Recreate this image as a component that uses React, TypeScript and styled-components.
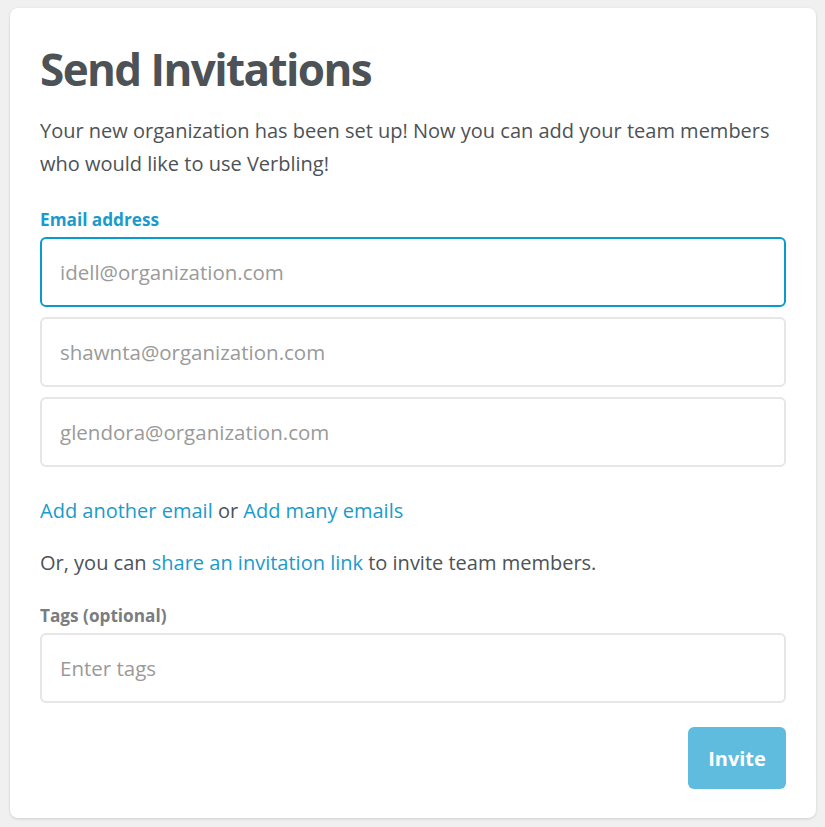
import React from "react";
import styled, { createGlobalStyle } from "styled-components";

const Global = createGlobalStyle`
  html, body { margin: 0; padding: 0; background: #f0f0f0; }
  body { font-family: "Open Sans", "Noto Sans", sans-serif; }
  * { box-sizing: border-box; }
`;

const Page = styled.div`
  padding: 8px 9px 9px 10px;
`;

const Card = styled.div`
  background: #fff;
  border-radius: 8px;
  box-shadow: 0 1px 3px rgba(0, 0, 0, 0.14);
  padding: 36px 30px 29px 30px;
  display: flex;
  flex-direction: column;
`;

const Title = styled.h1`
  margin: 0;
  font-size: 44px;
  font-weight: 700;
  letter-spacing: -1.6px;
  line-height: 50px;
  color: #4d5256;
`;

const Intro = styled.p`
  margin: 20px 0 0;
  font-size: 20px;
  line-height: 33px;
  color: #4d5256;
`;

const Label = styled.label<{ $accent?: boolean }>`
  display: block;
  margin-top: 28px;
  font-size: 17.2px;
  font-weight: 700;
  line-height: 24px;
  color: ${(p) => (p.$accent ? "#1a9bcb" : "#7a7d80")};
`;

const Fields = styled.div`
  display: flex;
  flex-direction: column;
  gap: 10px;
  margin-top: 5px;
`;

const Input = styled.input<{ $focus?: boolean }>`
  width: 100%;
  height: 70px;
  border: 2px solid ${(p) => (p.$focus ? "#0a9bcd" : "#e6e6e6")};
  border-radius: 6px;
  padding: 0 18px;
  font-family: "Open Sans", "Noto Sans", sans-serif;
  font-size: 20.5px;
  color: #4d5256;
  caret-color: #333;
  outline: none;
  background: #fff;
  &::placeholder { color: #9a9a9a; }
`;

const Line = styled.p<{ $top: number }>`
  margin: ${(p) => p.$top}px 0 0;
  font-size: 20px;
  line-height: 26px;
  color: #4d5256;
`;

const Link = styled.a`
  color: #1a9bcb;
  text-decoration: none;
  cursor: pointer;
`;

const Footer = styled.div`
  display: flex;
  justify-content: flex-end;
  margin-top: 24px;
`;

const Button = styled.button`
  width: 98px;
  height: 62px;
  border: none;
  border-radius: 6px;
  background: #5fbcdf;
  color: #fff;
  font-family: "Open Sans", "Noto Sans", sans-serif;
  font-size: 20px;
  font-weight: 700;
  cursor: pointer;
`;

export default function App() {
  return (
    <Page>
      <Global />
      <Card>
        <Title>Send Invitations</Title>
        <Intro>
          Your new organization has been set up! Now you can add your team members who would
          like to use Verbling!
        </Intro>
        <Label $accent>Email address</Label>
        <Fields>
          <Input $focus autoFocus placeholder="idell@organization.com" />
          <Input placeholder="shawnta@organization.com" />
          <Input placeholder="glendora@organization.com" />
        </Fields>
        <Line $top={31}>
          <Link>Add another email</Link> or <Link>Add many emails</Link>
        </Line>
        <Line $top={26}>
          Or, you can <Link>share an invitation link</Link> to invite team members.
        </Line>
        <Label>Tags (optional)</Label>
        <Fields>
          <Input placeholder="Enter tags" />
        </Fields>
        <Footer>
          <Button>Invite</Button>
        </Footer>
      </Card>
    </Page>
  );
}
